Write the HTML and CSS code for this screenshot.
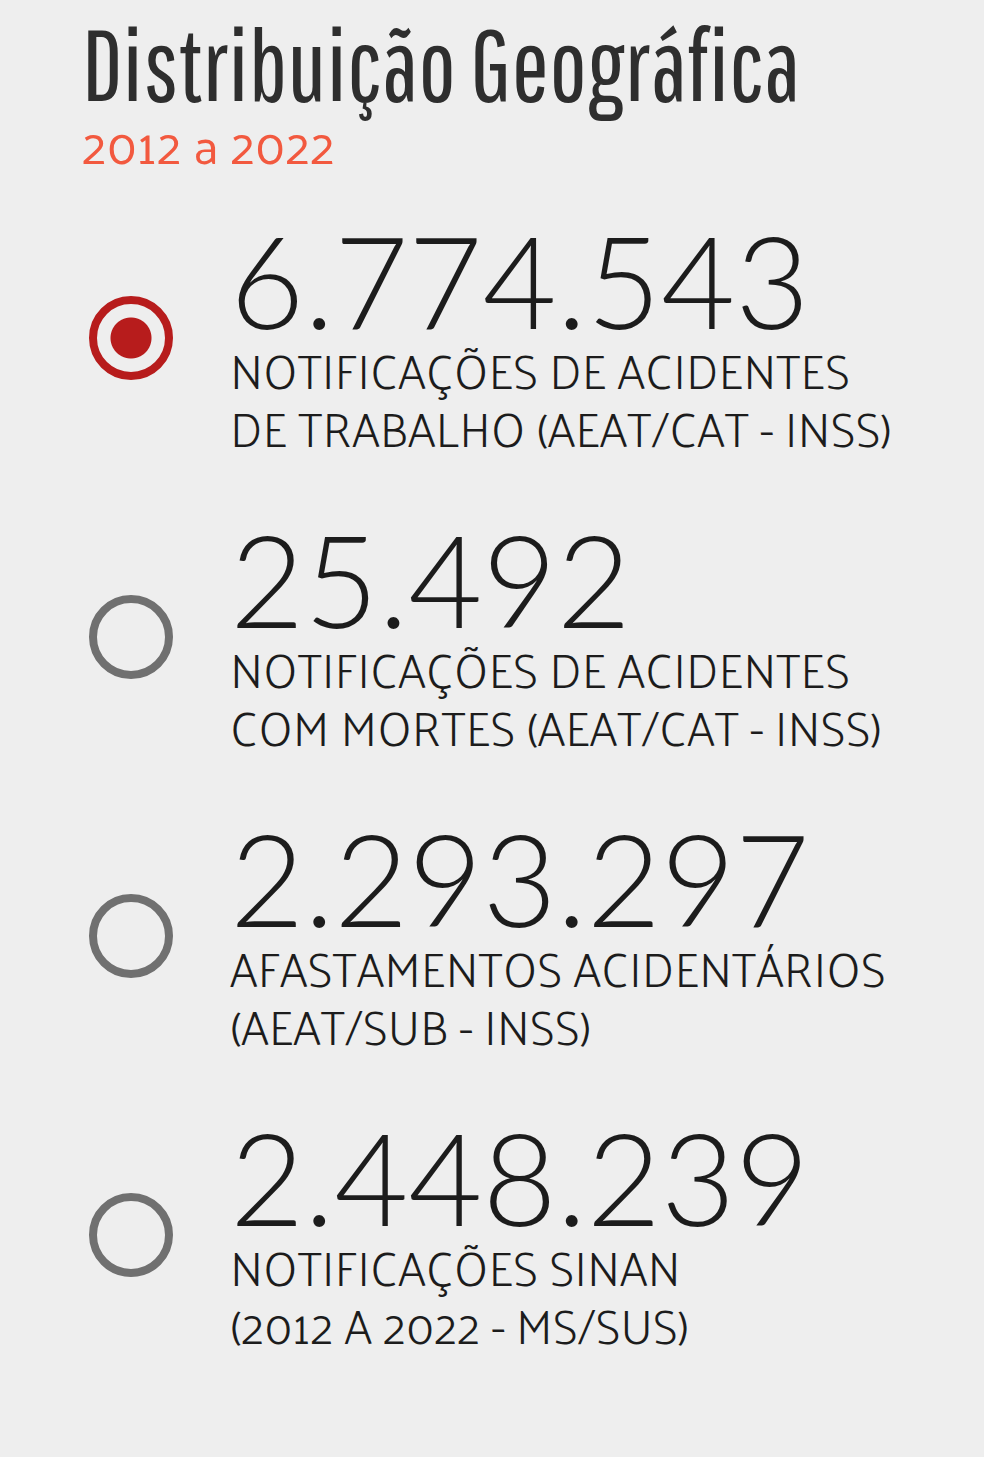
FILE: index.html
```
<!DOCTYPE html>
<html lang="pt-BR">
<head>
    <meta charset="UTF-8">
    <meta name="viewport" content="width=device-width, initial-scale=1.0">
    <title>Distribuição Geográfica</title>
    <link rel="stylesheet" href="styles.css">
</head>
<body>

<main class="panel">
    <h1 class="title">Distribuição Geográfica</h1>
    <p class="period">2012 a 2022</p>

    <div class="options">
        <label class="option">
            <input type="radio" class="radio" name="indicador" value="acidentes" checked>
            <span class="info">
                <span class="number">6.774.543</span>
                <span class="description">NOTIFICAÇÕES DE ACIDENTES<br>DE TRABALHO (AEAT/CAT - INSS)</span>
            </span>
        </label>
        <label class="option">
            <input type="radio" class="radio" name="indicador" value="mortes">
            <span class="info">
                <span class="number">25.492</span>
                <span class="description">NOTIFICAÇÕES DE ACIDENTES<br>COM MORTES (AEAT/CAT - INSS)</span>
            </span>
        </label>
        <label class="option">
            <input type="radio" class="radio" name="indicador" value="afastamentos">
            <span class="info">
                <span class="number">2.293.297</span>
                <span class="description">AFASTAMENTOS ACIDENTÁRIOS<br>(AEAT/SUB - INSS)</span>
            </span>
        </label>
        <label class="option">
            <input type="radio" class="radio" name="indicador" value="sinan">
            <span class="info">
                <span class="number">2.448.239</span>
                <span class="description">NOTIFICAÇÕES SINAN<br>(2012 A 2022 - MS/SUS)</span>
            </span>
        </label>
    </div>
</main>

</body>
</html>
```

FILE: styles.css
```
body {
    margin: 0;
    background-color: #eeeeee;
    color: #1c1c1c;
    font-family: Lato, 'Open Sans', sans-serif;
}
.panel {
    padding: 10px 48px 80px 82px;
}
.title {
    margin: 0;
    color: #2e2e2e;
    font-family: 'Pathway Gothic One', 'Liberation Sans Narrow', 'Liberation Sans', sans-serif;
    font-size: 100px;
    font-weight: 400;
    font-variant-ligatures: none;
    line-height: 108px;
    white-space: nowrap;
}
.period {
    margin: 0;
    color: #f2593f;
    font-family: Palanquin, Lato, sans-serif;
    font-size: 50px;
    line-height: 52px;
}
.options {
    display: flex;
    flex-direction: column;
    gap: 61px;
    margin-top: 49px;
}
.option {
    display: flex;
    align-items: center;
    gap: 57px;
    cursor: pointer;
}
.radio {
    appearance: none;
    flex: none;
    box-sizing: border-box;
    width: 84px;
    height: 84px;
    margin: 0 0 0 7px;
    border: 8px solid #707070;
    border-radius: 50%;
    cursor: pointer;
}
.radio:checked {
    border-color: #b71c1c;
    background: radial-gradient(circle, #b71c1c 20px, transparent 21px);
}
.number {
    display: block;
    font-size: 128px;
    font-weight: 300;
    line-height: 122px;
}
.description {
    display: block;
    font-family: Palanquin, Lato, sans-serif;
    font-size: 47px;
    font-weight: 300;
    line-height: 58px;
    white-space: nowrap;
}
```
